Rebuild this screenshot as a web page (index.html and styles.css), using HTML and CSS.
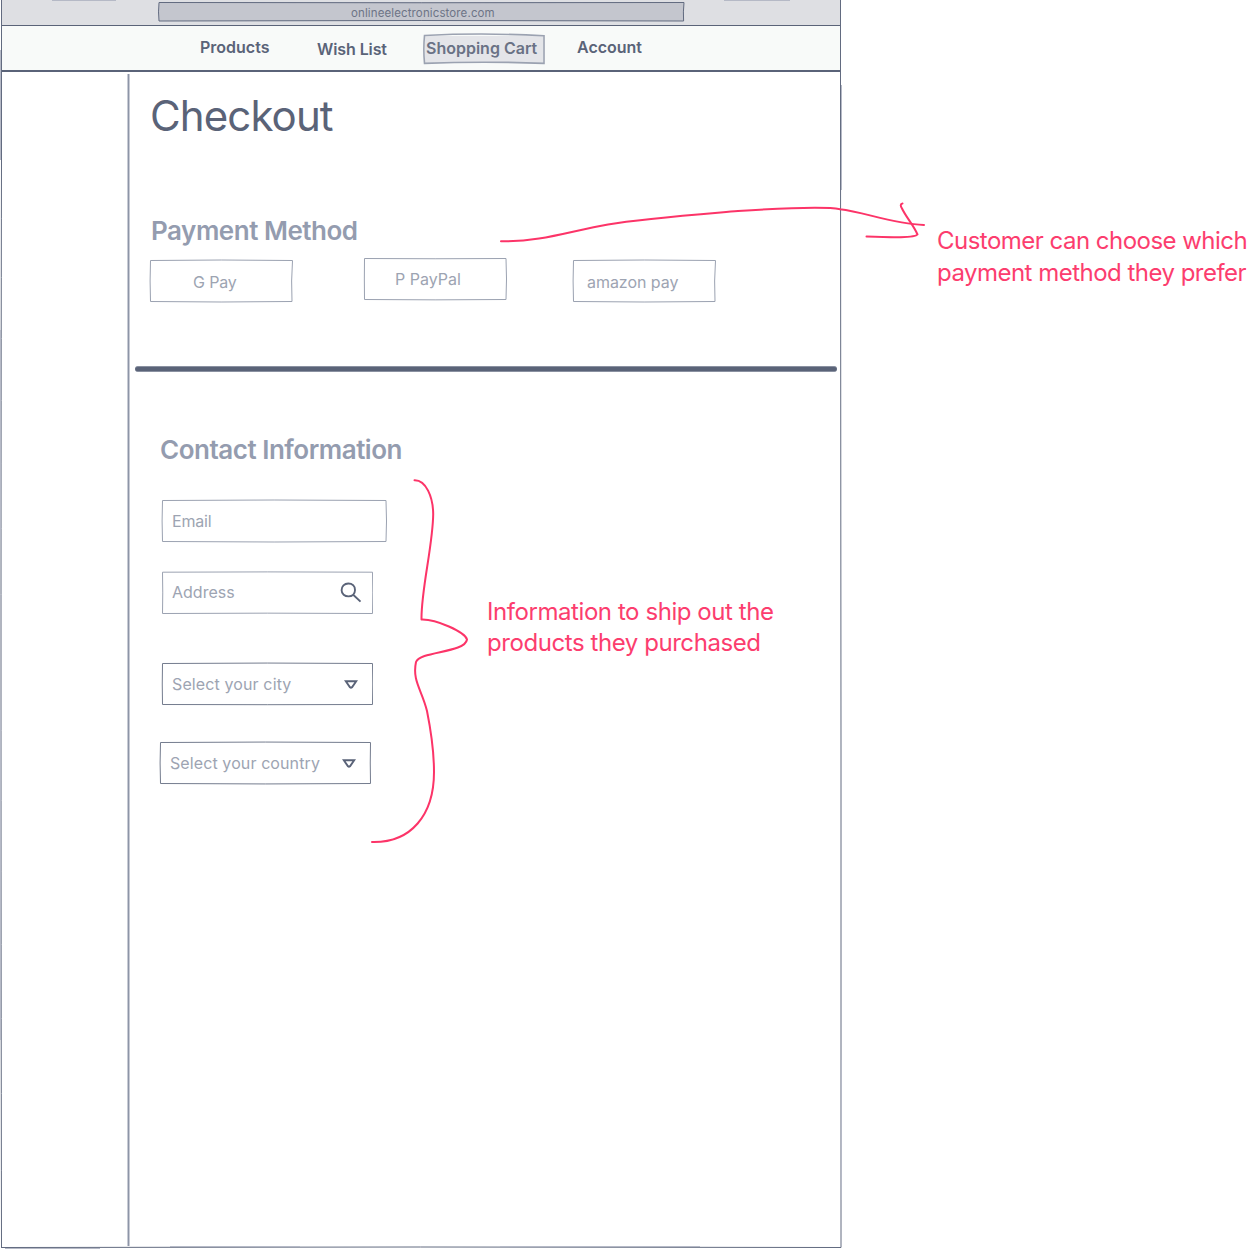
FILE: index.html
```html
<!DOCTYPE html>
<html lang="en">
<head>
<meta charset="utf-8">
<title>Checkout</title>
<link rel="stylesheet" href="styles.css">
</head>
<body>
<div class="canvas">
  <main class="window">
    <header class="browser-bar">
      <div class="address-bar">
        <svg class="outline" viewBox="0 0 527 21"><path class="slate" d="M1 1.500Q263 2 526 1.500Q525 11 525.600 20Q263 19 1 20Q0 11 1 1.500Z"/></svg>
        <span class="url">onlineelectronicstore.com</span>
      </div>
    </header>
    <nav class="nav">
      <a class="nav-item products"><span>Products</span></a>
      <a class="nav-item wish"><span>Wish List</span></a>
      <a class="nav-item cart">
        <svg class="outline" viewBox="0 0 124 32"><path d="M2.500 2.500Q62 -.5 122 2.800L122 30.400Q62 28 2.500 30.400Q1.200 16 2.500 2.500Z"/></svg>
        <span>Shopping Cart</span>
      </a>
      <a class="nav-item account"><span>Account</span></a>
    </nav>
    <div class="body">
      <aside class="sidebar"></aside>
      <section class="content">
        <h1><span>Checkout</span></h1>
        <h2 class="payment-title"><span>Payment Method</span></h2>
        <div class="payments">
          <div class="pay gpay"><svg class="outline" viewBox="0 0 144 44"><path d="M1.500 1.500Q72 .5 143.500 1.500Q142 22 143 42.500Q72 43.500 1.500 42.500Q.7 22 1.500 1.500Z"/></svg><span>G Pay</span></div>
          <div class="pay paypal"><svg class="outline" viewBox="0 0 144 44"><path d="M1.500 1.500Q72 2 143 1.500Q144 22 143 42.500Q72 43.200 1.500 42.500Q1.200 22 1.500 1.500Z"/></svg><span>P PayPal</span></div>
          <div class="pay amazon"><svg class="outline" viewBox="0 0 144 44"><path d="M1.500 1.500Q72 .5 143.500 1.500Q142 22 143 42.500Q72 43.500 1.500 42.500Q.7 22 1.500 1.500Z"/></svg><span>amazon pay</span></div>
        </div>
        <div class="divider"></div>
        <h2 class="contact-title"><span>Contact Information</span></h2>
        <form class="fields">
          <div class="field email"><svg class="outline" viewBox="0 0 226 44"><path d="M1.500 1.500Q113 .5 225 1.500Q226 22 225 42.500Q113 43.500 1.500 42.500Q.7 22 1.500 1.500Z"/></svg><span>Email</span></div>
          <div class="field address"><svg class="outline" viewBox="0 0 212 44"><path d="M1.500 1.200Q106 .6 211.500 1.200Q212 22 211.500 42.500Q106 41.800 1.500 42.500Q2 22 1.500 1.200Z"/></svg><span>Address</span>
            <svg class="search" width="22" height="22" viewBox="0 0 22 22"><path d="M8.300 1.500C12.300 1.500 15 4 15 8S12.200 14.400 8.500 14.400 1.600 12 1.600 8.200 4.400 1.500 8.300 1.500ZM13.200 12.700L20.500 19.600"/></svg>
          </div>
          <div class="field dark city"><svg class="outline" viewBox="0 0 212 44"><path d="M1.500 1.500Q106 .6 211.500 1.500Q212 22 211.500 42.500Q106 42.900 1.500 42.500Q1 22 1.500 1.500Z"/></svg><span>Select your city</span>
            <svg class="caret" width="14" height="11" viewBox="0 0 14 11"><path d="M1.800 2.200H12.200L8 8.300Q7 9.200 6 8.300Z"/></svg>
          </div>
          <div class="field dark country"><svg class="outline" viewBox="0 0 212 44"><path d="M1.500 1.500Q106 .6 211.500 1.500Q211 22 211.500 42.500Q106 43.400 1.500 42.500Q.7 22 1.500 1.500Z"/></svg><span>Select your country</span>
            <svg class="caret" width="14" height="11" viewBox="0 0 14 11"><path d="M1.800 2.200H12.200L8 8.300Q7 9.200 6 8.300Z"/></svg>
          </div>
        </form>
      </section>
    </div>
  </main>
  <svg class="ink" width="1258" height="1252" viewBox="0 0 1258 1252">
    <g class="frame">
      <path d="M1.500 0V160Q.5 620 1.500 1248M1.500 1247.500Q420 1246.500 841 1247.500V750L840.500 110V0"/>
      <path class="faint" d="M.5 50V160M.5 330V540M.5 710V1040M841.500 85V190M841.500 1060V1200M5 1248.500H100M170 1246.500H300M500 1246.500H700M52 .5H116M724 .5H790"/>
    </g>
    <g class="pink">
      <path d="M501 241.300C541 242 570 231 608 224.500C642 218.500 690 215 738 211C770 209 824 206 840 209.300C864 212 892 223.500 924 225"/>
      <path d="M902.500 203.500C900 204 900.500 206 902 208.500C906 217 914 226 917.500 234.500C915 238 893 237.500 866.500 236.500"/>
      <path d="M414.500 480.300C426 480 433 497 433.200 514C433 545 421 590 421.500 619.500C436 619 465 632 467 639.500C465 653 420 651 416 662C412 681 422 690 427 711C431 731 434 752 434 772C434 815 411 843 372 842"/>
    </g>
  </svg>
  <p class="note note-payment"><span>Customer can choose which</span><br><span>payment method they prefer</span></p>
  <p class="note note-shipping"><span>Information to ship out the</span><br><span>products they purchased</span></p>
</div>
</body>
</html>
```
FILE: styles.css
```css
* { box-sizing: border-box; }
body { margin: 0; background: #fff; font-family: Inter, "Liberation Sans", sans-serif; font-size: 16px; color: #5a6378; }
h1, h2, p { margin: 0; }
span { white-space: nowrap; }
.canvas { position: relative; width: 1258px; height: 1252px; overflow: hidden; }
.window { width: 840px; height: 1248px; padding-left: 2px; display: flex; flex-direction: column; }
.outline { position: absolute; inset: 0; width: 100%; height: 100%; fill: none; stroke: #9ba2b1; stroke-width: 1; }
.outline .slate { stroke: #626b80; }
.browser-bar { height: 26px; background: #dedfe3; border-bottom: 1px solid #5a6378; padding-left: 156px; display: flex; }
.address-bar { position: relative; width: 527px; height: 21px; margin-top: 1px; padding-left: 193px; background: linear-gradient(#c4c6ce, #c4c6ce) center / 525px 19px no-repeat; }
.url { position: relative; display: block; font-size: 11.500px; line-height: 24px; letter-spacing: .12px; color: #6d7486; }
.nav { height: 46px; background: #f8faf9; border-bottom: 2px solid #5a6378; display: flex; align-items: flex-start; font-weight: 600; line-height: 20px; }
.nav-item { position: relative; white-space: nowrap; }
.products { width: 117px; margin: 11px 0 0 198px; }
.wish { width: 105px; margin-top: 13px; letter-spacing: -.1px; }
.cart { width: 124px; height: 32px; margin-top: 7px; padding: 5px 0 0 4px; background: linear-gradient(#e4e5e9, #e4e5e9) center / 118px 27px no-repeat; color: #6a7285; }
.cart .outline { stroke-width: 1.600; }
.cart span { position: relative; }
.account { margin: 11px 0 0 31px; }
.body { flex: 1; display: flex; }
.sidebar { width: 128px; margin: 2px 0 2px; background: linear-gradient(to right, #c8cbd5 1px, #8d95a7 1px 2px, #c8cbd5 2px) right / 3px 100% no-repeat; }
.content { flex: 1; padding: 14px 0 0 5px; }
h1 { padding-left: 15px; font-size: 42px; font-weight: 400; line-height: 60px; letter-spacing: -.9px; }
h2 { font-size: 26px; font-weight: 600; line-height: 36px; letter-spacing: -.48px; color: #949caf; }
.payment-title { margin-top: 67px; padding-left: 16px; }
.payments { display: flex; margin-top: 8px; padding-left: 14px; color: #9da4b2; }
.pay { position: relative; width: 144px; height: 44px; line-height: 20px; padding-top: 13px; }
.gpay { margin-top: 2px; padding-left: 44px; letter-spacing: -.15px; }
.paypal { margin-left: 70px; padding: 12px 0 0 32px; }
.amazon { margin: 2px 0 0 65px; padding-left: 15px; letter-spacing: -.05px; }
.divider { width: 702px; height: 6px; margin-top: 63px; border-radius: 3px; background: #5a6378; border: solid #8a91a1; border-width: 1px 0; }
.contact-title { margin-top: 60px; padding-left: 25px; }
.fields { display: flex; flex-direction: column; margin-top: 31px; padding-left: 26px; color: #9da4b2; }
.field { position: relative; display: flex; align-items: center; width: 212px; height: 44px; padding: 0 0 1px 11px; line-height: 20px; }
.email { width: 226px; letter-spacing: -.2px; }
.address { margin-top: 28px; padding-bottom: 2px; }
.city { margin-top: 47px; letter-spacing: .12px; }
.country { margin: 35px 0 0 -2px; letter-spacing: .1px; }
.dark .outline { stroke: #747c8e; }
.search, .caret { position: absolute; fill: none; stroke: #5a6378; stroke-width: 1.900; }
.search { left: 179px; top: 11px; }
.caret { left: 183px; top: 16.500px; }
.ink { position: absolute; left: 0; top: 0; fill: none; pointer-events: none; }
.frame { stroke: #626b80; stroke-width: 1; }
.frame .faint { stroke: #b5b9c6; }
.pink { stroke: #fc3468; stroke-width: 2; stroke-linecap: round; stroke-linejoin: round; }
.note { position: absolute; font-size: 24px; line-height: 31.500px; letter-spacing: -.45px; color: #fc3d6e; }
.note-payment { left: 937px; top: 225px; letter-spacing: -.52px; }
.note-shipping { left: 487px; top: 595.500px; letter-spacing: -.43px; }
```
